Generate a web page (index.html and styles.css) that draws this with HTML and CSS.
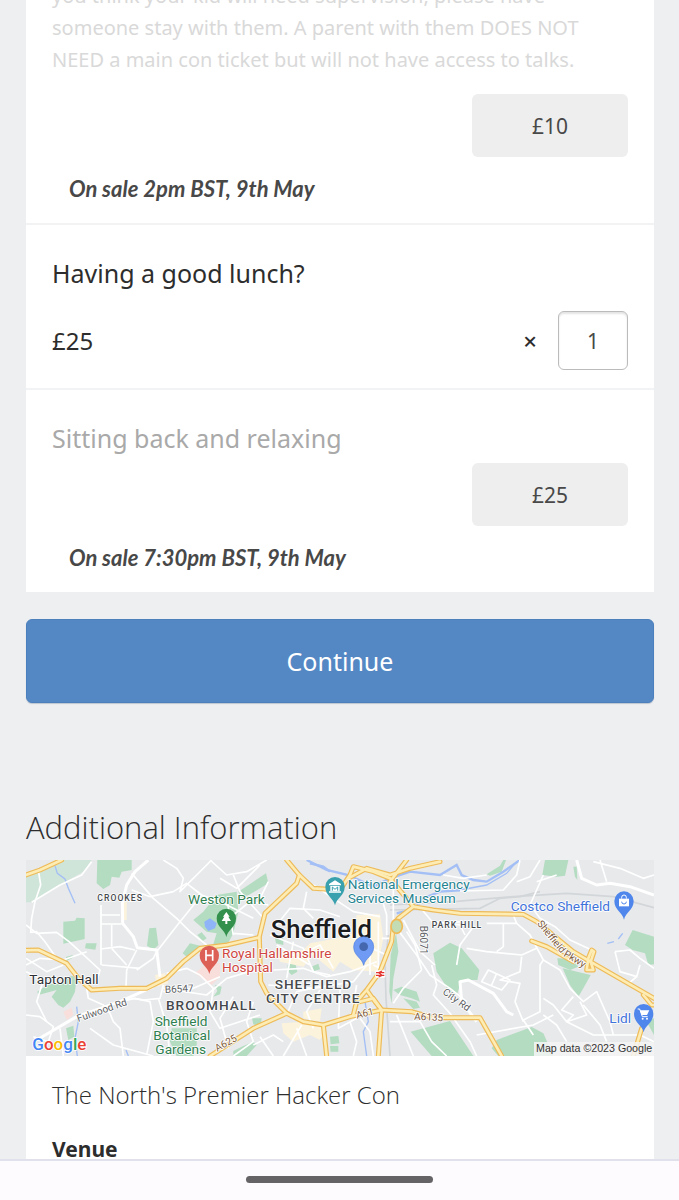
FILE: index.html
```html
<!DOCTYPE html>
<html lang="en">
<head>
	<meta charset="UTF-8" />
	<meta name="viewport" content="width=device-width, initial-scale=1.0" />
	<title>Tickets</title>
	<link rel="stylesheet" href="styles.css">
</head>
<body>
	<main class="page">
		<!-- Tickets -->
		<form class="order">
			<div class="tickets">
				<section class="ticket ticket-scrolled">
					<p class="description">you think your kid will need supervision, please have<br>someone stay with them. A parent with them DOES NOT<br>NEED a main con ticket but will not have access to talks.</p>
					<button class="price-button" type="button" disabled>£10</button>
					<p class="sale-note">On sale 2pm BST, 9th May</p>
				</section>

				<section class="ticket">
					<h3 class="ticket-name"><label for="lunch">Having a good lunch?</label></h3>
					<div class="ticket-row">
						<span class="price">£25</span>
						<span class="times">×</span>
						<input class="quantity" type="text" inputmode="numeric" id="lunch" name="lunch" value="1" />
					</div>
				</section>

				<section class="ticket locked">
					<h3 class="ticket-name">Sitting back and relaxing</h3>
					<button class="price-button" type="button" disabled>£25</button>
					<p class="sale-note">On sale 7:30pm BST, 9th May</p>
				</section>
			</div>
			<button class="continue" type="submit">Continue</button>
		</form>
		<!-- End of Tickets -->

		<!-- Additional Information -->
		<section class="info">
			<h2 class="info-title">Additional Information</h2>
			<svg class="map" viewBox="18 15 1884 588" role="img" aria-label="Map of Sheffield">
				<rect class="land" x="18" y="15" width="1884" height="588" />

				<!-- parks -->
				<path class="park-pale" d="M18 60L125 15H215L190 50L120 90L40 142H18Z" />
				<g class="park">
					<path d="M232 15H335V45L305 50L298 68L275 65L270 90L250 102L230 85Z" />
					<path d="M130 200L165 197L170 188L194 190V252L130 266Z" />
					<path d="M198 265H230L226 284L195 280Z" />
					<path d="M388 220L408 218L415 270L400 284L381 272Z" />
					<path d="M52 410L85 388L120 385L150 362L170 366L165 410L150 440L130 458L115 450L95 425L110 405L55 420Z" />
					<path d="M138 306L158 300V308L140 318Z" />
					<path d="M138 520L160 512L163 545L145 555Z" />
					<path d="M488 295L510 265L540 272L520 300L500 305Z" />
					<path d="M520 195L550 170L590 120L650 110L655 170L640 235L620 272L580 268L590 235L560 230Z" />
					<path d="M532 240L545 232L560 250L548 258Z" />
					<path d="M585 390L605 395L600 418L580 425L592 408Z" />
					<path d="M455 520H530V570L520 603H470L450 560Z" />
					<path d="M655 110L738 55L745 85L690 118L665 128Z" />
					<path d="M803 330L825 322L832 350L815 360L803 348Z" />
					<path d="M877 334L895 326L900 343L882 348Z" />
					<path d="M765 250H790V270L768 265Z" />
					<path d="M696 490H725L722 515L700 508Z" />
					<path d="M640 588L665 575L700 560L710 570L680 603H640Z" />
					<path d="M930 545L955 543L958 565L932 568Z" />
					<path d="M930 573H955V590H932Z" />
					<path d="M1128 235L1135 290L1120 370L1115 445L1108 410L1112 300Z" />
					<path d="M1145 395L1190 410L1200 440L1175 430L1140 420L1120 405Z" />
					<path d="M1150 430L1190 440L1200 458L1180 462Z" />
					<path d="M1172 530L1290 498L1360 603H1235Z" />
					<path d="M1240 295L1290 263L1325 280L1378 345L1372 375L1325 375L1312 415L1295 425L1270 380L1250 350Z" />
					<path d="M1430 555L1535 516L1570 535L1600 603H1435L1415 580Z" />
					<path d="M1575 15H1645L1635 62L1610 65L1567 60Z" />
					<path d="M1400 58L1440 32L1450 15H1458L1445 50L1410 62Z" />
					<path d="M1612 310L1660 312L1675 335L1650 345L1615 330Z" />
					<path d="M1628 340L1712 360L1690 400L1675 425L1650 390Z" />
					<path d="M1838 225L1902 245V328L1885 330L1875 295L1838 285L1815 270Z" />
					<path d="M1880 500L1902 490V540Z" />
					<path d="M1660 35H1670L1672 75L1665 65Z" />
				</g>

				<!-- city centre and hospitals -->
				<g class="centre">
					<path d="M1010 180L1080 178L1090 250L1070 350L1000 345L960 320L940 350L880 300L850 335L780 320L770 290L850 285L870 265L950 250L1000 235Z" />
					<path d="M785 505L850 500L920 520L900 555L870 540L820 560L790 535Z" />
					<path d="M850 470L905 460L900 500L850 490Z" />
					<path d="M305 140H320V195H305Z" />
					<path d="M405 360L435 355L445 385L410 395Z" />
				</g>
				<g class="hospital">
					<path d="M525 355L560 325H600V365L575 390Z" />
					<path d="M130 470L155 458L160 480L140 495Z" />
				</g>

				<!-- water -->
				<g class="water">
					<path class="lake" d="M553 200L570 190L590 205L585 220L565 228L555 215Z" />
					<path d="M105 32L112 55L135 72L145 100L165 145" />
					<path d="M170 455L175 500L165 550L172 603" />
					<path d="M318 585L325 603" />
					<path class="river" d="M860 15L920 45L985 60L1060 95L1110 70L1170 50L1260 60L1310 30L1325 60L1360 75L1400 80L1450 50L1500 15" />
					<path class="river" d="M870 25L910 35L930 50M1130 175L1185 160L1210 130L1260 110L1330 105" />
					<path d="M1320 105L1400 90L1460 55L1490 20" />
					<path d="M1035 440L1045 500L1030 530L1040 603" />
					<path d="M1762 265L1782 260M1795 252L1808 235" />
				</g>

				<!-- railway -->
				<g class="rail">
					<path d="M1110 150L1300 140L1480 125L1640 115L1780 125L1902 158" />
					<path d="M1110 165L1380 160L1440 130L1500 125L1560 110" />
					<path d="M1105 240L1095 330L1098 430L1110 603" />
				</g>

				<!-- minor roads -->
				<g class="road">
					<path d="M55 45L62 90L45 140L35 190L32 232L50 230L75 260L110 310" />
					<path d="M18 210L50 235L110 232L150 262L240 345L230 380" />
					<path d="M35 142L120 90L185 60L215 20" />
					<path d="M18 330L60 310L130 315L200 290" />
					<path d="M18 310L80 350L130 330M18 350L70 375L50 440L80 500" />
					<path d="M243 150V330M243 180H300M243 207H305M243 282L300 275L345 285" />
					<path d="M275 210V275M275 280L320 330M245 330L360 340M350 285L320 345L318 395" />
					<path class="wide" d="M385 15L345 50L320 90L307 145L308 205L340 245L352 278L410 285L420 365" />
					<path d="M335 55L400 130L470 190L510 230L560 270" />
					<path d="M335 105L390 125L460 110L500 85L545 120L610 145L700 190" />
					<path d="M430 15L470 40L490 70L480 110L560 30L575 15" />
					<path d="M545 120L480 200L410 290L400 310L350 345" />
					<path d="M570 15L620 60L680 50L740 15M600 70L650 100L720 30" />
					<path d="M18 480L60 485L100 515L85 560L40 545" />
					<path class="wide" d="M50 555L170 485L300 440L400 395" />
					<path d="M120 520L130 603M200 400L205 430L250 450L270 475L280 500L300 520L310 603" />
					<path d="M210 520L280 570L400 603M300 440L345 430L390 440L400 500L380 600" />
					<path d="M430 390L420 430L370 435L340 430M415 430L440 510L450 603" />
					<path d="M440 355L500 340L540 360M430 400L560 420L620 370L720 340" />
					<path d="M430 410L520 400L600 365M540 360L580 400L570 470L600 520L720 480" />
					<path d="M640 425L600 490L625 580M700 440L680 500L700 560L640 603M720 545L760 603" />
					<path d="M640 235L700 240M620 130L640 240M735 195L660 110L640 60" />
					<path d="M745 150L690 140L640 180M745 80L720 130M735 345L690 350L650 340" />
					<path d="M750 240L850 280L880 350L930 360M770 210L810 160L900 165L960 185" />
					<path d="M860 110L850 160L880 190M880 90L1000 170L1080 185" />
					<path d="M760 345L850 340L920 365L990 350L1070 320" />
					<path d="M770 270L870 330M820 260L800 370M840 300L900 270L940 340" />
					<path d="M745 390L880 400L1000 380L1040 330M800 480L830 410L900 395" />
					<path d="M900 405L860 470L880 520M960 400L955 520L1010 490M1010 390L1000 450" />
					<path d="M1050 190V360M1075 200V350M1085 130L1100 180L1100 240M1120 100V200" />
					<path d="M1085 250H1115M1055 280L1100 300M1060 330L1090 345" />
					<path d="M1130 220L1190 300L1230 360L1290 400L1340 440" />
					<path d="M1150 195L1200 290L1245 330M1195 150L1240 205L1330 200" />
					<path d="M1205 345L1150 400L1120 445M1205 345L1185 270L1160 230" />
					<path d="M1235 330L1250 390L1240 420L1290 475L1350 560L1370 603" />
					<path d="M1110 500L1200 500L1235 560L1280 603M1130 480L1180 603" />
					<path d="M990 500L1010 560L1000 603M1020 490L1050 530L1060 603" />
					<path d="M830 520L860 603M845 510L790 603M700 570L760 540L790 560" />
					<path class="wide" d="M1370 500L1325 440L1320 380L1345 375L1420 415L1460 470L1480 480" />
					<path d="M1335 240L1320 210L1240 200M1340 280L1400 290L1505 300L1550 280" />
					<path d="M1360 215L1320 270L1310 330M1450 205V275L1430 290M1480 180L1490 205H1400" />
					<path d="M1490 205L1530 240L1570 315L1560 330V470L1510 495L1540 540" />
					<path d="M1505 305L1500 350L1440 375L1500 385L1485 440L1510 500" />
					<path d="M1405 345L1470 375L1445 405L1385 380ZM1430 355L1415 390" />
					<path d="M1570 315L1620 345L1650 400L1690 440L1730 410L1770 500L1780 540" />
					<path d="M1570 430L1600 450L1640 500L1660 480L1625 465L1660 425M1640 500L1700 480L1680 440" />
					<path d="M1370 540L1540 510L1600 480M1570 480L1610 510L1640 560" />
					<path d="M1640 500L1720 540L1860 540L1902 560M1690 450L1740 510L1760 560" />
					<path d="M1490 80L1530 65L1560 15M1610 60L1550 80M1500 15L1490 60L1450 105L1320 108" />
					<path class="wide" d="M1670 15L1685 70L1730 90L1770 85L1830 95L1902 120" />
					<path d="M1720 20L1800 40L1870 70L1902 60M1760 80L1740 15" />
					<path d="M1570 60L1530 150L1560 190L1605 215L1650 255L1715 285" />
					<path d="M1785 290L1830 285L1860 310L1902 340M1785 290L1800 350L1850 365L1860 330" />
					<path d="M1850 365L1820 390M1270 60L1330 70L1400 60" />
				</g>

				<!-- A roads -->
				<g class="a-road">
					<path d="M18 60L60 45L125 15M18 286L55 285L140 325L175 370L215 405L300 400H380L440 370L490 320L540 280L620 270L715 248" />
					<path d="M800 15L838 60L830 85L735 175L718 245L722 380L740 415L800 475L850 500L910 510L990 485L1085 465L1175 470L1240 488H1380L1445 603" />
					<path d="M838 60L880 100L960 105L990 60L1000 35L1060 50L1110 70L1180 155L1240 165L1320 175L1510 178L1550 200L1660 290L1720 325L1902 430" />
					<path d="M985 70L1040 40L1110 60L1170 40L1260 20M1110 80L1160 15" />
					<path d="M1180 155L1135 190L1120 210L1115 260L1080 350L1040 405L1010 440L1000 480M1040 405L1065 440L1085 465L1075 603" />
					<path d="M800 475L700 520L570 603M910 510L920 603" />
					<path d="M1535 258L1580 275L1660 320M1700 345L1705 310L1715 285L1722 290L1712 320L1720 345Z" />
					<path d="M1840 603L1865 520M1870 420L1895 450L1902 450" />
					<path d="M1020 440L1060 430L1085 465" />
				</g>
				<g class="a-road-core">
					<path d="M18 60L60 45L125 15M18 286L55 285L140 325L175 370L215 405L300 400H380L440 370L490 320L540 280L620 270L715 248" />
					<path d="M800 15L838 60L830 85L735 175L718 245L722 380L740 415L800 475L850 500L910 510L990 485L1085 465L1175 470L1240 488H1380L1445 603" />
					<path d="M838 60L880 100L960 105L990 60L1000 35L1060 50L1110 70L1180 155L1240 165L1320 175L1510 178L1550 200L1660 290L1720 325L1902 430" />
					<path d="M985 70L1040 40L1110 60L1170 40L1260 20M1110 80L1160 15" />
					<path d="M1180 155L1135 190L1120 210L1115 260L1080 350L1040 405L1010 440L1000 480M1040 405L1065 440L1085 465L1075 603" />
					<path d="M800 475L700 520L570 603M910 510L920 603" />
					<path d="M1535 258L1580 275L1660 320M1700 345L1705 310L1715 285L1722 290L1712 320L1720 345Z" />
					<path d="M1840 603L1865 520M1870 420L1895 450L1902 450" />
					<path d="M1020 440L1060 430L1085 465" />
				</g>
				<ellipse class="roundabout" cx="1130" cy="214" rx="17" ry="21" />

				<!-- station -->
				<g>
					<rect x="1066" y="346" width="30" height="22" rx="4" fill="#fff" />
					<path d="M1068 353H1093M1068 361H1093M1086 348L1076 353L1086 361L1076 366" fill="none" stroke="#e3342f" stroke-width="4" />
				</g>

				<!-- place names -->
				<g class="district small">
					<text x="232" y="139">CROOKES</text>
					<text x="1235" y="220">PARK HILL</text>
				</g>
				<g class="district">
					<text x="438" y="466">BROOMHALL</text>
					<text x="764" y="402">SHEFFIELD</text>
					<text x="738" y="443">CITY CENTRE</text>
				</g>
				<text class="town" x="752" y="249">Sheffield</text>
				<text class="place" x="28" y="388">Tapton Hall</text>

				<!-- road names -->
				<g class="road-name">
					<text transform="translate(175 501) rotate(-19)">Fulwood Rd</text>
					<text transform="translate(435 414) rotate(-3)">B6547</text>
					<text transform="translate(1199 212) rotate(90)">B6071</text>
					<text transform="translate(1266 415) rotate(36)">City Rd</text>
				</g>
				<g class="road-name a-name">
					<text transform="translate(592 590) rotate(-29)">A625</text>
					<text transform="translate(1011 491) rotate(-14)">A61</text>
					<text transform="translate(1182 494) rotate(3)">A6135</text>
					<text transform="translate(1550 206) rotate(51)">Sheffield</text>
					<text transform="translate(1629 302) rotate(31)">Pkwy</text>
				</g>

				<!-- points of interest -->
				<g class="poi green">
					<text x="504" y="146">Weston Park</text>
					<text x="404" y="514">Sheffield</text>
					<text x="400" y="556">Botanical</text>
					<text x="406" y="597">Gardens</text>
				</g>
				<g class="poi red">
					<text x="606" y="308">Royal Hallamshire</text>
					<text x="606" y="350">Hospital</text>
				</g>
				<g class="poi teal">
					<text x="983" y="102">National Emergency</text>
					<text x="983" y="144">Services Museum</text>
				</g>
				<g class="poi blue">
					<text x="1472" y="167">Costco Sheffield</text>
					<text x="1768" y="504">Lidl</text>
				</g>

				<!-- pins -->
				<g transform="translate(619 190)">
					<path fill="#34904d" d="M0 56C-4 34-29 28-29 0A29 29 0 0 1 29 0C29 28 4 34 0 56Z" />
					<path fill="#fff" d="M0-19L10-5H6L14 8H3V17H-3V8H-14L-6-5H-10Z" />
				</g>
				<g transform="translate(568 301)">
					<path fill="#dd6057" d="M0 56C-4 34-29 28-29 0A29 29 0 0 1 29 0C29 28 4 34 0 56Z" />
					<path fill="none" stroke="#fff" stroke-width="5" d="M-10-16V16M10-16V16M-10 0H10" />
				</g>
				<g transform="translate(945 95)">
					<path fill="#39a0ae" d="M0 56C-4 34-29 28-29 0A29 29 0 0 1 29 0C29 28 4 34 0 56Z" />
					<path fill="#fff" d="M0-19L18-8V-4H-18V-8ZM-14-2H14V13H-14ZM-18 14H18V18H-18Z" />
					<path fill="none" stroke="#39a0ae" stroke-width="3" d="M-8 12V1L0 8L8 1V12" />
				</g>
				<g transform="translate(1031 275)">
					<path fill="#6f9bf5" stroke="#4c7fe0" stroke-width="2" d="M0 56C-4 34-30 28-30 0A30 30 0 0 1 30 0C30 28 4 34 0 56Z" />
					<circle r="13" fill="#4467ad" />
				</g>
				<g transform="translate(1812 138)">
					<path fill="#4f86ec" d="M0 56C-4 34-29 28-29 0A29 29 0 0 1 29 0C29 28 4 34 0 56Z" />
					<path fill="#fff" d="M-15-7H15V16H-15Z" />
					<path fill="none" stroke="#fff" stroke-width="3" d="M-7-7V-11A7 7 0 0 1 7-11V-7" />
					<path fill="none" stroke="#4f86ec" stroke-width="3" d="M-7 2A7 7 0 0 0 7 2" />
				</g>
				<g transform="translate(1871 476)">
					<path fill="#4f86ec" d="M0 56C-4 34-29 28-29 0A29 29 0 0 1 29 0C29 28 4 34 0 56Z" />
					<path fill="#fff" d="M-11-10H17L10 4H-6Z" />
					<path fill="none" stroke="#fff" stroke-width="3" d="M-18-14H-12L-4 9H12" />
					<circle cx="-3" cy="15" r="3" fill="#fff" />
					<circle cx="10" cy="15" r="3" fill="#fff" />
				</g>

				<!-- map credits -->
				<text class="logo" x="37" y="584"><tspan fill="#4285f4">G</tspan><tspan fill="#ea4335">o</tspan><tspan fill="#fbbc04">o</tspan><tspan fill="#4285f4">g</tspan><tspan fill="#34a853">l</tspan><tspan fill="#ea4335">e</tspan></text>
				<rect x="1542" y="561" width="360" height="42" fill="#f4f4f5" opacity="0.85" />
				<text class="credit" x="1548" y="592">Map data ©2023 Google</text>
			</svg>
			<div class="details">
				<p class="tagline">The North's Premier Hacker Con</p>
				<h4 class="venue">Venue</h4>
			</div>
		</section>
		<!-- End of Additional Information -->
	</main>

	<!-- Gesture bar -->
	<div class="gesture-bar"><span class="handle"></span></div>
</body>
</html>
```
FILE: styles.css
```css
:root {
	--page: #eeeff1;
	--text: #2d2d2d;
	--muted: #a9a9a9;
	--line: #f2f3f4;
	--primary: #5488c4;
}

* {
	margin: 0;
	padding: 0;
	box-sizing: border-box;
}

body {
	display: flex;
	flex-direction: column;
	height: 100vh;
	background: var(--page);
	color: var(--text);
	font-family: "Noto Sans", "Open Sans", sans-serif;
	font-size: 24px;
	line-height: 32px;
}

button, input {
	font-family: inherit;
}

.page {
	flex: 1;
	min-height: 0;
	overflow: hidden;
	padding: 0 25px 0 26px;
}

/* Tickets */
.tickets {
	background: #fff;
}

.ticket {
	display: flex;
	flex-direction: column;
	padding: 32px 26px 18px;
	border-bottom: 2px solid var(--line);
}

.ticket:last-child {
	border-bottom: 0;
}

.ticket-scrolled {
	margin-top: -20px;
	padding-top: 0;
}

.description {
	margin-bottom: 9px;
	color: #d9d9d9;
	font-size: 20px;
}

.ticket-name {
	font-size: 25px;
	font-weight: 400;
}

.locked .ticket-name {
	color: var(--muted);
}

.price-button {
	align-self: flex-end;
	width: 156px;
	height: 63px;
	margin-top: 9px;
	border: 0;
	border-radius: 6px;
	background: #eee;
	color: #484848;
	font-size: 21px;
}

.sale-note {
	margin: 16px 0 0 17px;
	color: #484848;
	font-family: "Lato", sans-serif;
	font-size: 22px;
	font-style: italic;
	font-weight: 700;
}

.ticket-row {
	display: flex;
	align-items: center;
	margin-top: 22px;
}

.times {
	margin: 0 21px 0 auto;
	font-weight: 500;
}

.quantity {
	width: 70px;
	height: 59px;
	border: 1px solid #bbb;
	border-radius: 6px;
	box-shadow: inset 0 2px 2px #e4e4e4;
	color: #484848;
	font-size: 21px;
	text-align: center;
}

.continue {
	display: block;
	width: 100%;
	height: 84px;
	margin-top: 27px;
	border: 1px solid #4c80bd;
	border-radius: 6px;
	box-shadow: 0 1px 1px #bcc5d0;
	background: var(--primary);
	color: #fff;
	font-size: 25px;
}

/* Additional information */
.info {
	margin-top: 104px;
}

.info-title {
	margin-bottom: 13px;
	font-family: "Open Sans", sans-serif;
	font-size: 31px;
	font-weight: 300;
	line-height: 40px;
}

.details {
	padding: 23px 26px;
	background: #fff;
}

.tagline {
	font-family: "Open Sans", sans-serif;
	font-weight: 300;
}

.venue {
	margin-top: 22px;
	font-size: 21px;
	font-weight: 700;
}

/* Map */
.map {
	display: block;
	width: 100%;
	font-family: Roboto, sans-serif;
}

.land {
	fill: #e7e9eb;
}

.park-pale {
	fill: #d0e5d9;
}

.park {
	fill: #b3dcc0;
}

.centre {
	fill: #fcf3dc;
}

.hospital {
	fill: #f8dfdb;
}

.water {
	fill: none;
	stroke: #a3bff5;
	stroke-width: 4;
}

.water .lake {
	fill: #8fb4f8;
	stroke: none;
}

.water .river {
	stroke-width: 7;
}

.rail {
	fill: none;
	stroke: #d3d6d9;
	stroke-width: 5;
}

.road {
	fill: none;
	stroke: #fff;
	stroke-width: 5;
	stroke-linejoin: round;
}

.road .wide {
	stroke-width: 9;
}

.a-road, .a-road-core {
	fill: none;
	stroke: #eebb58;
	stroke-width: 15;
	stroke-linejoin: round;
	stroke-linecap: round;
}

.a-road-core {
	stroke: #fdecb4;
	stroke-width: 8;
}

.roundabout {
	fill: #c3dcb4;
	stroke: #eebb58;
	stroke-width: 5;
}

.map text {
	stroke: #fff;
	stroke-width: 5;
	stroke-linejoin: round;
	paint-order: stroke;
}

.district {
	fill: #45494d;
	font-size: 41px;
	font-weight: 500;
	letter-spacing: 3px;
}

.district.small {
	font-size: 26px;
}

.town {
	fill: #1b1c1e;
	font-size: 77px;
	font-weight: 500;
}

.place {
	fill: #2c2f33;
	font-size: 41px;
}

.road-name {
	fill: #5c6063;
	font-size: 30px;
}

.a-name {
	fill: #7d5a3c;
}

.poi {
	font-size: 41px;
}

.poi.green {
	fill: #2f8050;
}

.poi.red {
	fill: #cf4640;
}

.poi.teal {
	fill: #258391;
}

.poi.blue {
	fill: #3f73da;
}

.map .logo {
	font-size: 51px;
	font-weight: 500;
}

.map .credit {
	fill: #333;
	stroke: none;
	font-family: "Liberation Sans", sans-serif;
	font-size: 32px;
}

/* Gesture bar */
.gesture-bar {
	display: flex;
	justify-content: center;
	height: 41px;
	padding-top: 15px;
	border-top: 2px solid #e0e1ea;
	background: #fdfbfe;
}

.handle {
	width: 187px;
	height: 7px;
	border-radius: 4px;
	background: #656366;
}
```
